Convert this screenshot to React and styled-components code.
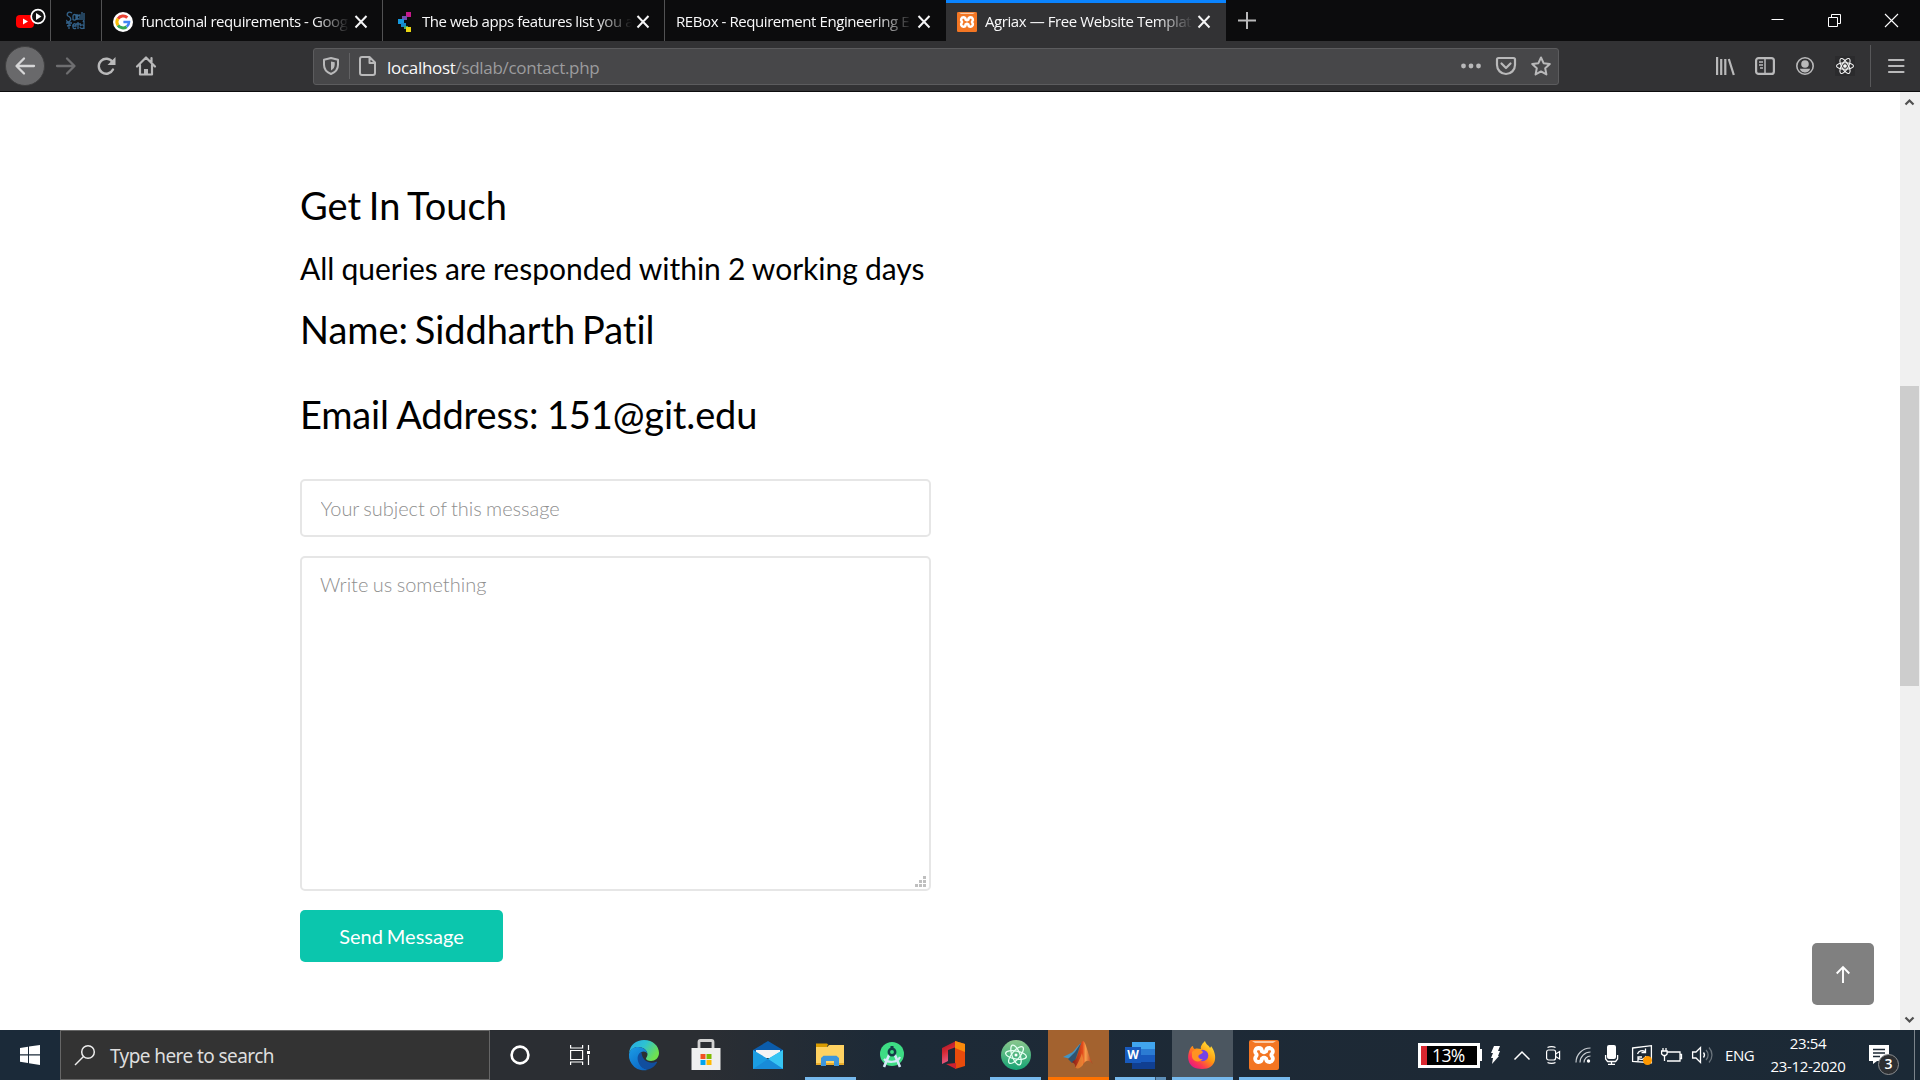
import React from "react";
import styled, { createGlobalStyle } from "styled-components";

const ui = '"Open Sans", "Noto Sans", sans-serif';

const GlobalStyle = createGlobalStyle`
  * { box-sizing: border-box; }
  html, body { margin: 0; padding: 0; }
  body { width: 1920px; height: 1080px; overflow: hidden; background: #fff; }
  svg { display: block; flex: none; overflow: visible; }
`;

const Screen = styled.div`
  width: 1920px;
  height: 1080px;
  display: flex;
  flex-direction: column;
  font-family: ${ui};
`;

/* ---------- tab strip ---------- */
const TabStrip = styled.div`
  display: flex;
  height: 41px;
  background: #0c0c0d;
`;
const PinnedTab = styled.div`
  width: 51px;
  height: 41px;
  display: flex;
  align-items: center;
  padding-left: ${(p) => p.$pad}px;
  border-right: 1px solid #525253;
`;
const Tab = styled.div`
  width: ${(p) => p.$width}px;
  height: 41px;
  display: flex;
  align-items: center;
  padding: 2px ${(p) => p.$end || 14}px 0 11px;
  background: ${(p) => (p.$active ? "#323234" : "transparent")};
  border-right: ${(p) => (p.$line ? "1px solid #525253" : "none")};
  box-shadow: ${(p) => (p.$active ? "inset 0 3px 0 #0a84ff" : "none")};
`;
const TabTitle = styled.div`
  flex: 1;
  min-width: 0;
  margin: 0 4px 2px ${(p) => p.$gap}px;
  white-space: nowrap;
  font-size: 15px;
  line-height: 24px;
  letter-spacing: -0.42px;
  color: #f9f9fa;
  mask-image: linear-gradient(to left, transparent 0, #000 36px);
`;
const NewTab = styled.div`
  display: flex;
  align-items: center;
  padding-left: 12px;
`;
const WindowControls = styled.div`
  margin-left: auto;
  display: flex;
  align-items: center;
  gap: 44px;
  padding-right: 22px;
`;

/* ---------- toolbar ---------- */
const Toolbar = styled.div`
  display: flex;
  align-items: center;
  height: 51px;
  background: #323234;
  border-bottom: 1px solid #0c0c0d;
`;
const NavButtons = styled.div`
  width: 313px;
  display: flex;
  align-items: center;
  padding-left: 5px;
`;
const BackButton = styled.div`
  width: 40px;
  height: 40px;
  border-radius: 50%;
  background: #69696b;
  border: 1px solid #3f3f40;
  display: grid;
  place-items: center;
  margin-right: 11px;
`;
const NavIcon = styled.div`
  margin-right: ${(p) => p.$after}px;
`;
const UrlBar = styled.div`
  width: 1246px;
  height: 37px;
  display: flex;
  align-items: center;
  padding: 0 7px 0 9px;
  background: #474749;
  border: 1px solid #5c5c5e;
  border-radius: 3px;
`;
const Separator = styled.div`
  width: 1px;
  height: ${(p) => p.$height}px;
  background: #626264;
  margin: 0 ${(p) => p.$right}px 0 ${(p) => p.$left}px;
`;
const Url = styled.div`
  margin-left: 11px;
  font-size: 17px;
  line-height: 24px;
  letter-spacing: -0.3px;
  color: #9c9c9e;
  flex: 1;
  padding-top: 3px;
`;
const Host = styled.span`
  color: #f9f9fa;
`;
const UrlActions = styled.div`
  display: flex;
  align-items: center;
  gap: 15px;
`;
const ToolbarEnd = styled.div`
  margin-left: auto;
  display: flex;
  align-items: center;
  gap: 21px;
`;
const MenuButton = styled.div`
  height: 42px;
  width: 50px;
  margin-left: -6px;
  border-left: 1px solid #58585a;
  display: flex;
  align-items: center;
  padding-left: 17px;
`;

/* ---------- page ---------- */
const Viewport = styled.div`
  height: 938px;
  display: flex;
  background: #fff;
`;
const Page = styled.main`
  width: 1900px;
  padding: 85px 0 0 300px;
  position: relative;
  font-family: Lato, sans-serif;
  color: #000;
`;
const Heading = styled.h2`
  margin: 0 0 ${(p) => p.$after}px;
  font-weight: 400;
  font-size: ${(p) => p.$size}px;
  line-height: ${(p) => p.$line}px;
  letter-spacing: ${(p) => p.$track || 0}px;
  word-spacing: ${(p) => p.$words || 0}px;
  font-variant-ligatures: none;
  white-space: nowrap;
`;
const Form = styled.form`
  width: 631px;
  display: flex;
  flex-direction: column;
  align-items: flex-start;
`;
const fieldStyle = `
  display: block;
  width: 631px;
  margin: 0;
  background: #fff;
  border: 2px solid #e6e6e6;
  border-radius: 5px;
  font-family: Lato, sans-serif;
  font-weight: 300;
  font-size: 20px;
  font-variant-ligatures: none;
  word-spacing: -1px;
  outline: none;
  &::placeholder { color: #8f8f8f; opacity: 1; }
`;
const SubjectInput = styled.input`
  ${fieldStyle}
  height: 58px;
  padding: 0 18.5px;
  letter-spacing: -0.03px;
`;
const MessageWrap = styled.div`
  position: relative;
  margin: 19px 0;
`;
const MessageInput = styled.textarea`
  ${fieldStyle}
  height: 335px;
  padding: 11px 18px;
  line-height: 30px;
  resize: none;
`;
const Grip = styled.div`
  position: absolute;
  right: 5px;
  bottom: 4px;
`;
const SendButton = styled.button`
  width: 203px;
  height: 52px;
  padding: 0;
  border: 0;
  border-radius: 5px;
  background: #0bc6ad;
  color: #fff;
  font: 400 20px Lato, sans-serif;
  word-spacing: -1.2px;
`;
const ToTop = styled.div`
  position: absolute;
  right: 26px;
  bottom: 25px;
  width: 62px;
  height: 62px;
  border-radius: 5px;
  background: #808080;
  display: grid;
  place-items: center;
`;
const ScrollTrack = styled.div`
  width: 20px;
  background: #f0f0f0;
  display: flex;
  flex-direction: column;
  align-items: center;
  padding: 7px 1px 7px 0;
`;
const ScrollThumb = styled.div`
  width: 19px;
  height: 300px;
  margin-top: 281px;
  margin-bottom: auto;
  background: #cdcdcd;
`;

/* ---------- taskbar ---------- */
const Taskbar = styled.div`
  height: 50px;
  display: flex;
  background: linear-gradient(90deg, #1b2a39 0, #1b2a39 60px, #2b2e33 490px, #2b2e33 700px, #1d2a37 880px, #1d2935 1500px, #1b2936 100%);
`;
const StartButton = styled.div`
  width: 60px;
  display: grid;
  place-items: center;
`;
const SearchBox = styled.div`
  width: 430px;
  height: 50px;
  display: flex;
  align-items: center;
  padding-left: 14px;
  background: #333;
  border: 1px solid #666;
  color: #dedede;
  font-size: 19px;
  letter-spacing: -0.58px;
  font-family: "Noto Sans", sans-serif;
`;
const SearchText = styled.span`
  margin: 1px 0 0 15px;
`;
const Task = styled.div`
  width: ${(p) => p.$width || 62}px;
  height: 50px;
  display: flex;
  flex-direction: column;
  align-items: center;
  background: ${(p) => (p.$fill ? `linear-gradient(90deg, transparent 1px, ${p.$fill} 1px)` : "none")};
`;
const TaskIcon = styled.div`
  height: 47px;
  display: grid;
  place-items: center;
  padding-top: 3px;
`;
const Underline = styled.div`
  width: ${(p) => p.$width}px;
  height: 3px;
  margin-left: ${(p) => (p.$width > 55 ? 1 : 0)}px;
  background: ${(p) => p.$color};
`;
const Tray = styled.div`
  margin-left: auto;
  width: 502px;
  display: flex;
  align-items: center;
  color: #fff;
`;
const Battery = styled.div`
  width: 62px;
  height: 25px;
  border: 3px solid #fff;
  background: linear-gradient(90deg, #d9272f 0, #d9272f 6px, #000 6px);
  display: flex;
  align-items: center;
  padding-left: 11px;
  font-size: 17.5px;
  letter-spacing: -0.6px;
  line-height: 19px;
`;
const BatteryTip = styled.div`
  width: 2px;
  height: 12px;
  background: #fff;
  margin-right: 9px;
`;
const TrayIcon = styled.div`
  margin-left: ${(p) => p.$before}px;
`;
const Language = styled.div`
  margin-left: 13px;
  width: 30px;
  font-size: 15px;
  letter-spacing: -0.4px;
  white-space: nowrap;
`;
const Clock = styled.div`
  margin-left: 3px;
  width: 100px;
  font-size: 15px;
  line-height: 23px;
  letter-spacing: -0.35px;
  text-align: center;
`;
const Notifications = styled.div`
  position: relative;
  margin-left: 11px;
  width: 46px;
  height: 50px;
  padding-top: 15px;
  border-right: 1px solid #7b838b;
`;
const Badge = styled.div`
  position: absolute;
  left: 9px;
  top: 24px;
  width: 21px;
  height: 21px;
  border-radius: 50%;
  border: 1px solid #8b8d90;
  background: #2d2f32;
  font-size: 14px;
  font-weight: 600;
  line-height: 18px;
  text-align: center;
`;

const Icon = ({ w, h, children, color = "#b9b9ba", sw = 2, box }) => (
  <svg width={w} height={h} viewBox={box || `0 0 ${w} ${h}`} fill="none" stroke={color} strokeWidth={sw}>
    {children}
  </svg>
);
const CloseIcon = () => (
  <Icon w={14} h={14} color="#f5f5f6"><path d="M1.500 1l11 11.500M12.500 1l-11 11.500" /></Icon>
);
const GoogleIcon = () => (
  <Icon w={20} h={20} sw={3} color="none">
    <circle cx="10" cy="10" r="10" fill="#fff" />
    <path d="M5 6.800A6 6 0 0 1 14.300 5.600" stroke="#ea4335" />
    <path d="M5 6.600a6 6 0 0 0 0 6.800" stroke="#fbbc05" />
    <path d="M5 13.300a6 6 0 0 0 8.600 1.400" stroke="#34a853" />
    <path d="M10.400 10H16a6 6 0 0 1-2.300 4.700" stroke="#4285f4" strokeWidth="2.600" />
  </Icon>
);
const PixelIcon = () => (
  <Icon w={17} h={20} color="none" box="-4 0 17 20">
    <path d="M8 0h5v5H8z" fill="#c7188c" />
    <path d="M4 4h5v4H4z" fill="#6f4fb0" />
    <path d="M0 7h6v5H0z" fill="#1598dc" />
    <path d="M3 11h5v4H3z" fill="#1389c9" />
    <path d="M6 14h4v3H6z" fill="#3fae6c" />
    <path d="M8 15h5v5H8z" fill="#e9d512" />
  </Icon>
);
const ScribbleIcon = () => (
  <Icon w={19} h={19} color="#33628a" sw={1.300}>
    <path d="M6 2C2-1 0 4 2 5s4 3 2 5-4 0-3-1M7 9V5c0-2 3-2 3 0v3c-1 2-3 1-3 0M11 3v6M13 8c-3 0-2-4 1-4v5M16 1v8M18 2v7l-1 2M0 12h6M3 11v7M1 15l4-1M7 15h3c0-4-4-2-3 1 0 2 2 2 3 1M12 11v7M10 13h5M14 15c2-2 4-1 4 1s-4 2-4 0M18 10v8" />
  </Icon>
);
const XamppIcon = ({ size }) => (
  <Icon w={size} h={size} box="0 0 30 30">
    <rect width="30" height="30" rx="2" fill="#f37623" stroke="none" />
    <path d="M3 1h24l-3 2H6z" fill="#fbc9a2" stroke="none" />
    <path d="M9.500 8c2.400 0 3.400 1.500 3.400 3.400 1.200 1 3 1 4.200 0C17.100 9.500 18.100 8 20.500 8a3.400 3.400 0 0 1 2.500 5.600c-.8.900-.8 1.900 0 2.800a3.400 3.400 0 0 1-2.500 5.600c-2.400 0-3.400-1.500-3.400-3.400-1.200-1-3-1-4.200 0 0 1.900-1 3.400-3.400 3.400A3.400 3.400 0 0 1 7 16.400c.8-.9.8-1.900 0-2.800A3.400 3.400 0 0 1 9.500 8z" stroke="#fff" strokeWidth="3.800" />
  </Icon>
);

function Tabs() {
  return (
    <TabStrip>
      <PinnedTab $pad={16}>
        <Icon w={30} h={30} color="none">
          <rect x="0" y="9" width="18" height="13" rx="4" fill="#f00" />
          <path d="M7 12.500l5 3-5 3z" fill="#fff" />
          <circle cx="22" cy="10.500" r="6.800" fill="#111" stroke="#fff" strokeWidth="1.700" />
          <path d="M20 7l5.500 3.500L20 14z" fill="#fff" />
        </Icon>
      </PinnedTab>
      <PinnedTab $pad={15}><ScribbleIcon /></PinnedTab>
      <Tab $width={281} $line>
        <GoogleIcon /><TabTitle $gap={8}>functoinal requirements - Goog</TabTitle><CloseIcon />
      </Tab>
      <Tab $width={282} $line $end={14}>
        <PixelIcon /><TabTitle $gap={11}>The web apps features list you a</TabTitle><CloseIcon />
      </Tab>
      <Tab $width={281} $end={15}>
        <TabTitle $gap={0}>REBox - Requirement Engineering E</TabTitle><CloseIcon />
      </Tab>
      <Tab $width={280} $active $end={15}>
        <XamppIcon size={20} /><TabTitle $gap={8}>Agriax — Free Website Templat</TabTitle><CloseIcon />
      </Tab>
      <NewTab><Icon w={18} h={18}><path d="M9 0v17M0 8.500h18" /></Icon></NewTab>
      <WindowControls>
        <Icon w={13} h={13} color="#fff" sw={1}><path d="M0.500 5.500h12" /></Icon>
        <Icon w={13} h={13} color="#fff" sw={1}><path d="M.5 3.500h9v9h-9zM3.500 3.500v-3h9v9h-3" /></Icon>
        <Icon w={13} h={13} color="#fff" sw={1.100}><path d="M0 0l13 13M13 0L0 13" /></Icon>
      </WindowControls>
    </TabStrip>
  );
}

function BrowserToolbar() {
  return (
    <Toolbar>
      <NavButtons>
        <BackButton><Icon w={20} h={18} color="#d6d6d7" sw={2.300}><path d="M19 9H2M9 1.500L1.500 9 9 16.500" strokeLinecap="round" strokeLinejoin="round" /></Icon></BackButton>
        <NavIcon $after={21}><Icon w={20} h={18} color="#6e6e70" sw={2.300}><path d="M1 9h17M11 1.500L18.500 9 11 16.500" strokeLinecap="round" strokeLinejoin="round" /></Icon></NavIcon>
        <NavIcon $after={20}><Icon w={19} h={18} sw={2.400}><path d="M16 12.500A7.500 7.500 0 1 1 15.500 5" strokeLinecap="round" /><path d="M18.500 0v8h-8z" fill="#b9b9ba" stroke="none" /></Icon></NavIcon>
        <Icon w={20} h={20} sw={2.200}><path d="M1 10.500L10 1.500l9 9M4 9v9.500h12V9M15.500 6V2" strokeLinecap="round" strokeLinejoin="round" /><path d="M8 18v-5h4v5" fill="#b9b9ba" stroke="none" /></Icon>
      </NavButtons>
      <UrlBar>
        <Icon w={16} h={18}><path d="M8 1L1 2.800v5C1 12.500 4 15.500 8 17c4-1.500 7-4.500 7-9.200v-5z" strokeLinejoin="round" /><path d="M8 4.500v9c2.500-1.500 3.700-3.300 3.700-6V5.300z" fill="#b9b9ba" stroke="none" /></Icon>
        <Separator $height={26} $left={10} $right={9} />
        <Icon w={17} h={20}><path d="M3 1h7.500L16 6.500V17a2 2 0 0 1-2 2H3a2 2 0 0 1-2-2V3a2 2 0 0 1 2-2zM10.500 1v6H16" strokeLinejoin="round" /></Icon>
        <Url><Host>localhost</Host>/sdlab/contact.php</Url>
        <UrlActions>
          <Icon w={20} h={6}><g fill="#b9b9ba" stroke="none"><circle cx="2.500" cy="3" r="2.400" /><circle cx="10" cy="3" r="2.400" /><circle cx="17.500" cy="3" r="2.400" /></g></Icon>
          <Icon w={20} h={18} sw={2.200}><path d="M2.500 1h15A1.500 1.500 0 0 1 19 2.500V8A9 9 0 0 1 1 8V2.500A1.500 1.500 0 0 1 2.500 1z" /><path d="M5.500 6.500l4.500 4.500 4.500-4.500" strokeLinecap="round" strokeLinejoin="round" /></Icon>
          <Icon w={20} h={20}><path d="M10 1.500l2.600 5.700 6.200.8-4.600 4.200 1.200 6.200-5.400-3-5.400 3 1.200-6.200L1.200 8l6.200-.8z" strokeLinejoin="round" /></Icon>
        </UrlActions>
      </UrlBar>
      <ToolbarEnd>
        <Icon w={19} h={18} sw={2.200}><path d="M2.100 0v18M6.200 2v16M10.300 2v16M13.800 2l5 16" /></Icon>
        <Icon w={20} h={18} sw={2.200}><rect x="1.100" y="1.100" width="17.800" height="15.800" rx="2.500" /><path d="M10 1v16" strokeWidth="1.500" /><path d="M4 5h4M4 8h4M5 11h3" strokeWidth="1.300" /></Icon>
        <Icon w={18} h={18} sw={1.600}><circle cx="9" cy="9" r="8.200" /><circle cx="9" cy="7" r="3.800" fill="#b9b9ba" stroke="none" /><path d="M3.800 11.800h10.400C13 15 11 15.500 9 15.500s-4-.5-5.200-3.700z" fill="#b9b9ba" stroke="none" /></Icon>
        <Icon w={20} h={20} color="#f5f5f5" sw={1.100}><rect width="20" height="20" fill="#2b2b2d" stroke="none" /><ellipse cx="10" cy="10" rx="8.500" ry="3.300" /><ellipse cx="10" cy="10" rx="8.500" ry="3.300" transform="rotate(60 10 10)" /><ellipse cx="10" cy="10" rx="8.500" ry="3.300" transform="rotate(120 10 10)" /><circle cx="10" cy="10" r="1.300" fill="#fff" /></Icon>
        <MenuButton><Icon w={17} h={16} sw={2.200}><path d="M1 2h14.500M1 8h14.500M1 14h14.500" strokeLinecap="round" /></Icon></MenuButton>
      </ToolbarEnd>
    </Toolbar>
  );
}

function ContactPage() {
  return (
    <Viewport>
      <Page>
        <Heading $size={38} $line={56} $after={11} $words={-2}>Get In Touch</Heading>
        <Heading as="h3" $size={30} $line={48} $after={8.5} $words={-0.6}>All queries are responded within 2 working days</Heading>
        <Heading $size={38} $line={56} $after={29.5} $words={-2.8} $track={-0.05}>Name: Siddharth Patil</Heading>
        <Heading $size={38} $line={56} $after={37} $words={-1} $track={-0.15}>Email Address: 151@git.edu</Heading>
        <Form>
          <SubjectInput placeholder="Your subject of this message" />
          <MessageWrap>
            <MessageInput placeholder="Write us something" />
            <Grip><Icon w={11} h={11} color="none"><path d="M8 0h3v3H8zM4 4h3v3H4zM8 4h3v3H8zM0 8h3v3H0zM4 8h3v3H4zM8 8h3v3H8z" fill="#bfbfbf" /></Icon></Grip>
          </MessageWrap>
          <SendButton type="button">Send Message</SendButton>
        </Form>
        <ToTop><Icon w={14} h={17} color="#fff" sw={1.900}><path d="M7 17V1.500M.7 7.500L7 1.200l6.300 6.300" /></Icon></ToTop>
      </Page>
      <ScrollTrack>
        <Icon w={9} h={6} color="#505050" sw={2.200}><path d="M.5 5.500l4-4 4 4" /></Icon>
        <ScrollThumb />
        <Icon w={9} h={6} color="#505050" sw={2.200}><path d="M.5.5l4 4 4-4" /></Icon>
      </ScrollTrack>
    </Viewport>
  );
}

const CortanaIcon = () => <Icon w={20} h={20} color="#fff" sw={2.600}><circle cx="10" cy="10" r="8.400" /></Icon>;
const TaskViewIcon = () => (
  <Icon w={22} h={20} color="#fff" sw={1.200}><path d="M.6 5.500h12v9H.6zM.6 0v3h12V0M.6 20v-3h12v3M18.500 0v5M18.500 10v10" /><path d="M17 6h3v3h-3z" fill="#fff" stroke="none" /></Icon>
);
const EdgeIcon = () => (
  <svg width="30" height="30" viewBox="0 0 30 30">
    <defs>
      <linearGradient id="edgeTop" x1="0" y1="0" x2="1" y2=".5"><stop offset="0" stopColor="#27a7e8" /><stop offset=".5" stopColor="#2dc2d2" /><stop offset="1" stopColor="#6fe04f" /></linearGradient>
      <linearGradient id="edgeSide" x1="0" y1="0" x2=".6" y2="1"><stop offset="0" stopColor="#1b9de6" /><stop offset="1" stopColor="#0c69c7" /></linearGradient>
    </defs>
    <path d="M0 13C1 5 7 0 15 0c9 0 15 6 15 13 0 5-4 8-8 8-3 0-5-1-5-2.500 0-1 1.500-2 1.500-4C18.500 10 14 7 9 7 5 7 2 9.500 0 13z" fill="url(#edgeTop)" />
    <path d="M0 14C1 9.500 5 7 9 7c5 0 9 3 9.500 7-.5-1.500-2-2.500-4-2.500-3 0-5 3-5 7 0 6 4 10 9.500 11.300A15 15 0 0 1 0 14z" fill="url(#edgeSide)" />
    <path d="M12.500 12.200C9 13.500 8 17 9 21c1.300 5 5.500 8.500 10 8.500 4-.8 7-3.500 9-7 .4-.8-.3-1-.9-.7-5.500 2.500-14-.2-14.600-9.600z" fill="#114e9e" />
  </svg>
);
const StoreIcon = () => (
  <svg width="30" height="30" viewBox="0 0 30 30">
    <path d="M8 10V2a1.500 1.500 0 0 1 1.500-1.500h11A1.500 1.500 0 0 1 22 2v8" fill="none" stroke="#d2d2d2" strokeWidth="2.800" />
    <path d="M.5 8h29v22H.5z" fill="#efefef" />
    <path d="M9.500 14h5v5h-5z" fill="#f25022" /><path d="M15.500 14h5v5h-5z" fill="#7fba00" /><path d="M9.500 20h5v5h-5z" fill="#00a4ef" /><path d="M15.500 20h5v5h-5z" fill="#ffb900" />
  </svg>
);
const MailIcon = () => (
  <svg width="30" height="28" viewBox="0 0 30 28">
    <path d="M0 9L15 0l15 9v8H0z" fill="#0b5cab" /><path d="M3 9h24v8H3z" fill="#f4f4f4" /><path d="M0 9l15 9L30 9v19H0z" fill="#1b9de2" /><path d="M30 9v19L15 18z" fill="#37c5f3" /><path d="M0 28l15-10 15 10z" fill="#188bd8" />
  </svg>
);
const FolderIcon = () => (
  <svg width="28" height="25" viewBox="0 0 28 25">
    <path d="M0 .5h11l2 2h-2v6H0z" fill="#d99b00" /><path d="M0 4h11l2.500-2H28v20H0z" fill="#ffd262" /><path d="M0 20h28v2H0z" fill="#eaac2c" /><path d="M5 23V15l2.500-2.300h13L23 15v8h-5v-5h-8v5z" fill="#3d96dc" /><path d="M10 18h8v2h-8z" fill="#ffd262" />
  </svg>
);
const StudioIcon = () => (
  <svg width="24" height="26" viewBox="0 0 24 26">
    <circle cx="12" cy="12" r="12" fill="#3ddc84" /><path d="M12 4v4" stroke="#153c46" strokeWidth="3" /><path d="M9.500 12L4 25M14.500 12L20 25" stroke="#d5e9f8" strokeWidth="2.600" /><path d="M4 17c3.500 4 13.500 4 16-2" fill="none" stroke="#d5e9f8" strokeWidth="2.200" /><circle cx="12" cy="10" r="3.200" fill="#3ddc84" stroke="#153c46" strokeWidth="2.500" />
  </svg>
);
const OfficeIcon = () => (
  <svg width="23" height="28" viewBox="0 0 23 28">
    <defs><linearGradient id="office" x2=".3" y2="1"><stop stopColor="#9c1021" /><stop offset=".5" stopColor="#d62a35" /><stop offset="1" stopColor="#e65f8a" /></linearGradient></defs>
    <path d="M0 7L14 0v6L6 9v11l-6 3z" fill="url(#office)" /><path d="M13 0l10 3v22l-10 3z" fill="#e84b0c" /><path d="M13 0l10 3v8L13 7z" fill="#f98b0c" /><path d="M4 23l10-1v6z" fill="#cf2130" />
  </svg>
);
const AtomIcon = () => (
  <svg width="30" height="30" viewBox="0 0 30 30">
    <defs><linearGradient id="atom" x2="0" y2="1"><stop stopColor="#8bc78d" /><stop offset="1" stopColor="#15a474" /></linearGradient></defs>
    <circle cx="15" cy="15" r="15" fill="url(#atom)" />
    <g fill="none" stroke="#e5fff2" strokeWidth="1.300"><ellipse cx="15" cy="15" rx="10.500" ry="4" transform="rotate(10 15 15)" /><ellipse cx="15" cy="15" rx="10.500" ry="4" transform="rotate(70 15 15)" /><ellipse cx="15" cy="15" rx="10.500" ry="4" transform="rotate(130 15 15)" /></g><circle cx="15" cy="15" r="1.500" fill="#fff" />
  </svg>
);
const MatlabIcon = () => (
  <svg width="30" height="28" viewBox="0 0 30 28">
    <defs><linearGradient id="matlab" x2="1"><stop stopColor="#7f1d18" /><stop offset=".5" stopColor="#e34b1c" /><stop offset=".65" stopColor="#f6a04c" /><stop offset="1" stopColor="#ac2b18" /></linearGradient></defs>
    <path d="M0 16l8-4c3-1 6-7 10-10l-7 19-3-3z" fill="#4394c4" /><path d="M5 18l7-7 6-9-6 18-3 2z" fill="#31536f" />
    <path d="M9 21l4-3c3-6 5-18 7-18 3 0 5 15 10 23-4-4-6-4-9-1-3 4-4 6-9 5 1-3-1-5-3-6z" fill="url(#matlab)" /><path d="M12 27c2-3 5-9 7-15 1 5 2 7 1 12-3 3-4 4-8 3z" fill="#f2a13f" opacity=".6" />
  </svg>
);
const WordGlyph = styled.div`
  width: 30px;
  height: 27px;
  display: flex;
  align-items: center;
  background: linear-gradient(#41a5ee 0 25%, #2b7cd3 25% 50%, #185abd 50% 75%, #103f91 75%) no-repeat 7px 0 / 23px 27px;
`;
const WordLetter = styled.div`
  width: 16px;
  height: 16px;
  background: #185abd;
  color: #fff;
  font-size: 12px;
  font-weight: 700;
  line-height: 16px;
  text-align: center;
`;
const FirefoxIcon = () => (
  <svg width="28" height="29" viewBox="0 0 28 29">
    <defs>
      <linearGradient id="fox" x1=".9" y1=".1" x2=".2" y2="1"><stop stopColor="#ffe33b" /><stop offset=".45" stopColor="#ff980e" /><stop offset=".75" stopColor="#ff3b4e" /><stop offset="1" stopColor="#e31587" /></linearGradient>
    </defs>
    <path d="M2 8c1-2 2-3 3-3 0 2 1 3 2 3 2-1 4 0 6 0-1-3 2-6 4-8 1 4 4 4 5 7 1-1 1-2 1-2 7 9 6 23-9 23C0 28-2 17 2 8z" fill="url(#fox)" />
    <circle cx="14.500" cy="14.500" r="5.800" fill="#7542e5" /><path d="M4 11c3-3 6-2 9-2l2 2c-1 2-3 2-4 3-2 2 1 5 4 4-3 4-10 3-11-2z" fill="#ff9322" />
  </svg>
);

const tasks = [
  { icon: <CortanaIcon />, width: 60 },
  { icon: <TaskViewIcon />, width: 62 },
  { icon: <EdgeIcon />, width: 63 },
  { icon: <StoreIcon /> },
  { icon: <MailIcon /> },
  { icon: <FolderIcon />, line: 51 },
  { icon: <StudioIcon /> },
  { icon: <OfficeIcon />, width: 61 },
  { icon: <AtomIcon />, width: 63, line: 51 },
  { icon: <MatlabIcon />, line: 61, color: "#ff7200", fill: "#a3622f" },
  { icon: <WordGlyph><WordLetter>W</WordLetter></WordGlyph>, line: 51, color: "linear-gradient(90deg, #76b9ed 40px, #35536e 40px, #35536e 41px, #5d8fb9 41px)" },
  { icon: <FirefoxIcon />, line: 61, fill: "#4b5660" },
  { icon: <XamppIcon size={30} />, line: 51 },
];

function WindowsTaskbar() {
  return (
    <Taskbar>
      <StartButton>
        <svg width="20" height="20" viewBox="0 0 20 20"><path d="M0 3l8-1.200V9.300H0zM9 1.600L20 0v9.300H9zM0 10.500h8V18l-8-1.200zM9 10.500h11V20L9 18.300z" fill="#fff" /></svg>
      </StartButton>
      <SearchBox>
        <Icon w={20} h={20} color="#eee" sw={1.500}><circle cx="13" cy="7" r="6.300" /><path d="M8.500 11.500L0 20" /></Icon>
        <SearchText>Type here to search</SearchText>
      </SearchBox>
      {tasks.map((t, i) => (
        <Task key={i} $width={t.width} $fill={t.fill}>
          <TaskIcon>{t.icon}</TaskIcon>
          {t.line && <Underline $width={t.line} $color={t.color || "#76b9ed"} />}
        </Task>
      ))}
      <Tray>
        <Battery>13%</Battery>
        <BatteryTip />
        <Icon w={9} h={18} color="none"><path d="M3 0h6L7 5h2L7 10h1L1 18l1-6H0l2-5H0z" fill="#fff" /></Icon>
        <TrayIcon $before={14}><Icon w={16} h={9} color="#fff" sw={1.500}><path d="M.5 8.500L8 1l7.500 7.500" /></Icon></TrayIcon>
        <TrayIcon $before={16}><Icon w={14} h={18} color="#fff" sw={1.200}><rect x=".6" y="4" width="9" height="10" rx="2" /><path d="M9.600 8l4-2.500v7.500l-4-2.500M1.500 1.500c2-1.200 6-1.200 8 0M1.500 16.500c2 1.200 6 1.200 8 0" /></Icon></TrayIcon>
        <TrayIcon $before={15}><Icon w={16} h={16} color="#c9ced3" sw={1.200}><path d="M1 15.500A14.500 14.500 0 0 1 15.500 1M5 15.500A10.500 10.500 0 0 1 15.500 5M9 15.500A6.500 6.500 0 0 1 15.500 9" /><circle cx="13.500" cy="14" r="1.700" fill="#fff" stroke="none" /></Icon></TrayIcon>
        <TrayIcon $before={14}><Icon w={13} h={20} color="#fff" sw={1.300}><rect x="2" y="0" width="9" height="14" rx="2" fill="#fff" stroke="none" /><path d="M.6 10v4l2 2.500h8l2-2.500v-4M6.500 16.500v3M3 19.300h7" /></Icon></TrayIcon>
        <TrayIcon $before={14}><Icon w={20} h={20} color="#fff" sw={1.300}><path d="M.6 3L19.400.7v17L.6 16.500z" /><path d="M5.500 9A5 5 0 0 1 13 6.500M13.500 3.500v4h-4M14 11a5 5 0 0 1-7.500 2.500M6 16v-4h4" /><circle cx="15.500" cy="15.500" r="4.500" fill="#ff9800" stroke="none" /></Icon></TrayIcon>
        <TrayIcon $before={9}><Icon w={21} h={15} color="#fff" sw={1.300}><path d="M6.500 4h12.500v9H6M19.500 6.500h1v4h-1M2 0v3M5 0v3M.6 3h5.500v3L4.500 7.500h-2L.6 6zM3.500 8v5" /></Icon></TrayIcon>
        <TrayIcon $before={10}><Icon w={20} h={18} color="#fff" sw={1.300}><path d="M.6 6H4l4.500-4.500v15L4 12H.6z" /><path d="M11.500 6.500a4 4 0 0 1 0 5" /><path d="M14 4a7 7 0 0 1 0 10M17 1.500a11 11 0 0 1 0 15" stroke="#6b747c" /></Icon></TrayIcon>
        <Language>ENG</Language>
        <Clock>23:54<br />23-12-2020</Clock>
        <Notifications>
          <Icon w={20} h={19} color="#1d2935" sw={1.300}><path d="M0 0h20v16H8l-4 3v-3H0z" fill="#fff" stroke="none" /><path d="M4 4.500h12M4 8h12M4 11.500h7" /></Icon>
          <Badge>3</Badge>
        </Notifications>
      </Tray>
    </Taskbar>
  );
}

export default function App() {
  return (
    <Screen>
      <GlobalStyle />
      <Tabs />
      <BrowserToolbar />
      <ContactPage />
      <WindowsTaskbar />
    </Screen>
  );
}
